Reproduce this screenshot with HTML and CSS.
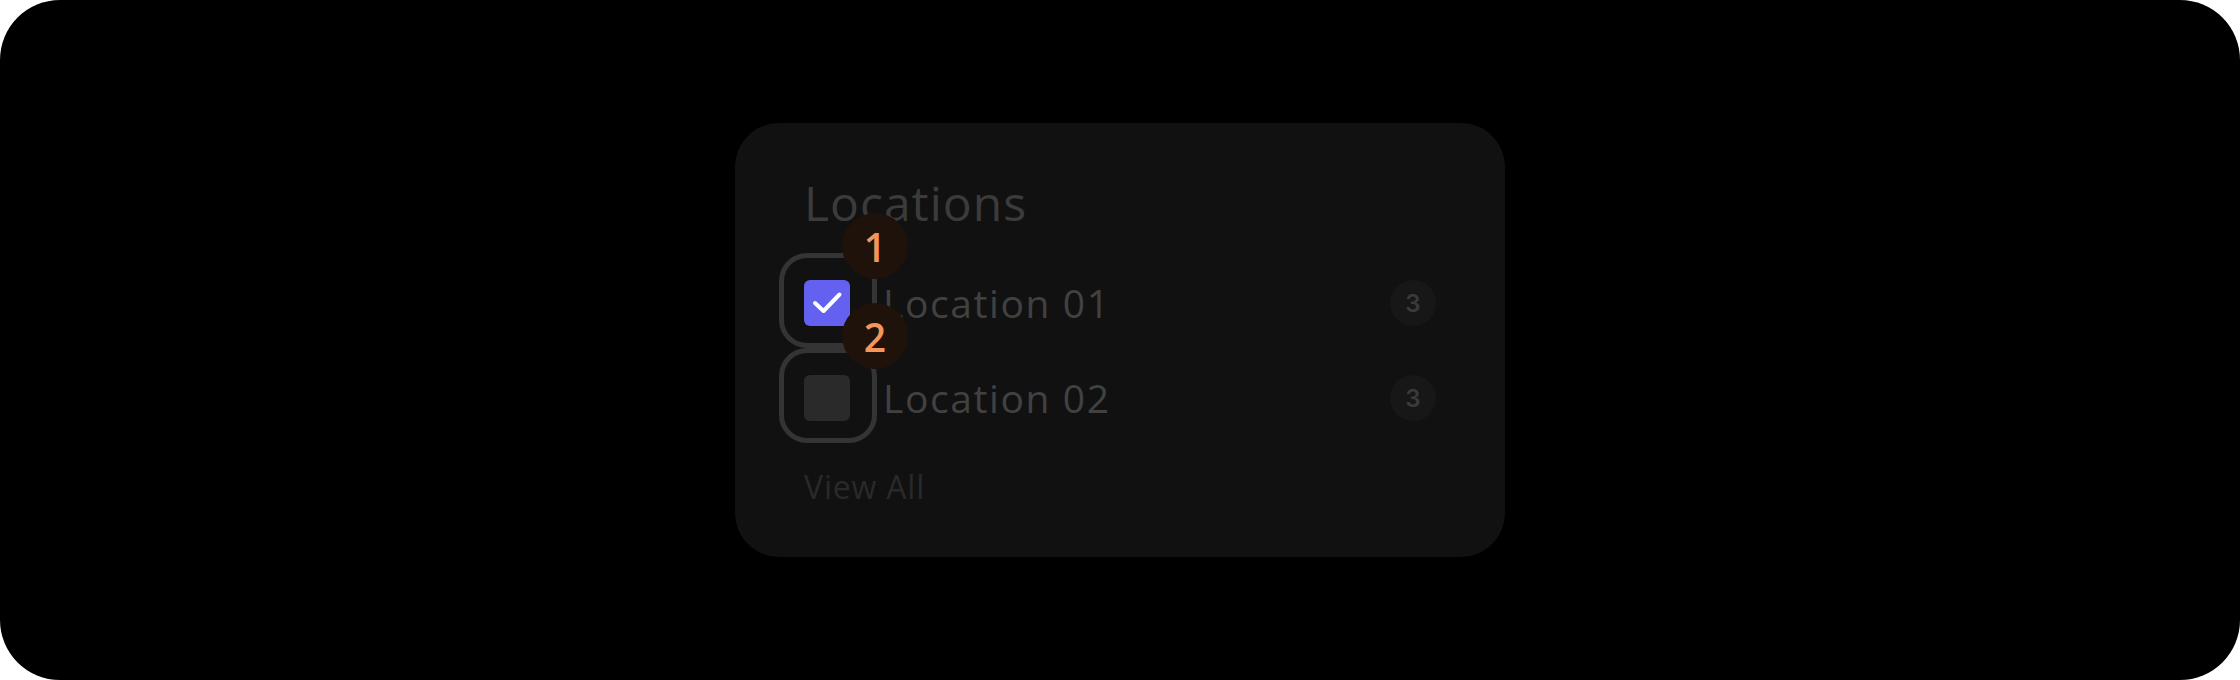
FILE: index.html
```html
<!DOCTYPE html>
<html lang="en">
<head>
<meta charset="utf-8">
<title>Locations</title>
<link rel="stylesheet" href="styles.css">
</head>
<body>
<div class="frame">
  <section class="card">
    <h2 class="title">Locations</h2>
    <ul class="list">
      <li class="row">
        <span class="check is-checked">
          <svg class="tick" viewBox="0 0 46 46" width="46" height="46"><path d="M11 23 L19.5 31 L35.5 14.5" fill="none" stroke="#ffffff" stroke-width="4" stroke-linecap="round" stroke-linejoin="round"/></svg>
        </span>
        <span class="label">Location 01</span>
        <span class="count">3</span>
        <span class="mark mark-1">1</span>
      </li>
      <li class="row">
        <span class="check"></span>
        <span class="label">Location 02</span>
        <span class="count">3</span>
        <span class="mark mark-2">2</span>
      </li>
    </ul>
    <a class="view-all">View All</a>
  </section>
</div>
</body>
</html>
```
FILE: styles.css
```css
html, body {
  margin: 0;
  padding: 0;
  background: #ffffff;
}

.frame {
  width: 2240px;
  height: 680px;
  background: #000000;
  border-radius: 60px;
  display: flex;
  align-items: center;
  justify-content: center;
  font-family: "Open Sans", "Liberation Sans", sans-serif;
}

.card {
  width: 770px;
  height: 434px;
  box-sizing: border-box;
  background: #111111;
  border-radius: 44px;
  padding: 52px 69px 53px 69px;
  display: flex;
  flex-direction: column;
  gap: 49px;
}

.title {
  margin: 0;
  font-size: 48px;
  line-height: 56px;
  font-weight: 400;
  color: #3b3b3b;
  letter-spacing: 1px;
}

.list {
  list-style: none;
  margin: 0;
  padding: 0;
  display: flex;
  flex-direction: column;
  gap: 49px;
}

.row {
  position: relative;
  height: 46px;
  display: flex;
  align-items: center;
}

.check {
  position: relative;
  flex: none;
  width: 46px;
  height: 46px;
  border-radius: 6px;
  background: #2a2a2a;
}

.check.is-checked {
  background: #6461f1;
}

.check::before {
  content: "";
  position: absolute;
  top: -27px;
  right: -27px;
  bottom: -22px;
  left: -25px;
  border: 5px solid #343434;
  border-radius: 28px;
}

.tick {
  display: block;
}

.label {
  flex: 1;
  margin-left: 33px;
  font-size: 39px;
  line-height: 46px;
  color: #414141;
  letter-spacing: 1.6px;
}

.count {
  flex: none;
  width: 46px;
  height: 46px;
  border-radius: 50%;
  background: #171717;
  color: #3a3a3a;
  font-family: Inter, "Open Sans", sans-serif;
  font-weight: 600;
  font-size: 24px;
  display: flex;
  align-items: center;
  justify-content: center;
}

.mark {
  position: absolute;
  left: 38px;
  width: 66px;
  height: 66px;
  border-radius: 50%;
  background: #1e120b;
  color: #f3965b;
  font-size: 39px;
  font-weight: 600;
  display: flex;
  align-items: center;
  justify-content: center;
  z-index: 2;
}

.mark-1 {
  top: -67px;
}

.mark-2 {
  top: -72px;
}

.view-all {
  font-size: 32px;
  line-height: 34px;
  color: #292929;
  letter-spacing: 0.8px;
}
```
